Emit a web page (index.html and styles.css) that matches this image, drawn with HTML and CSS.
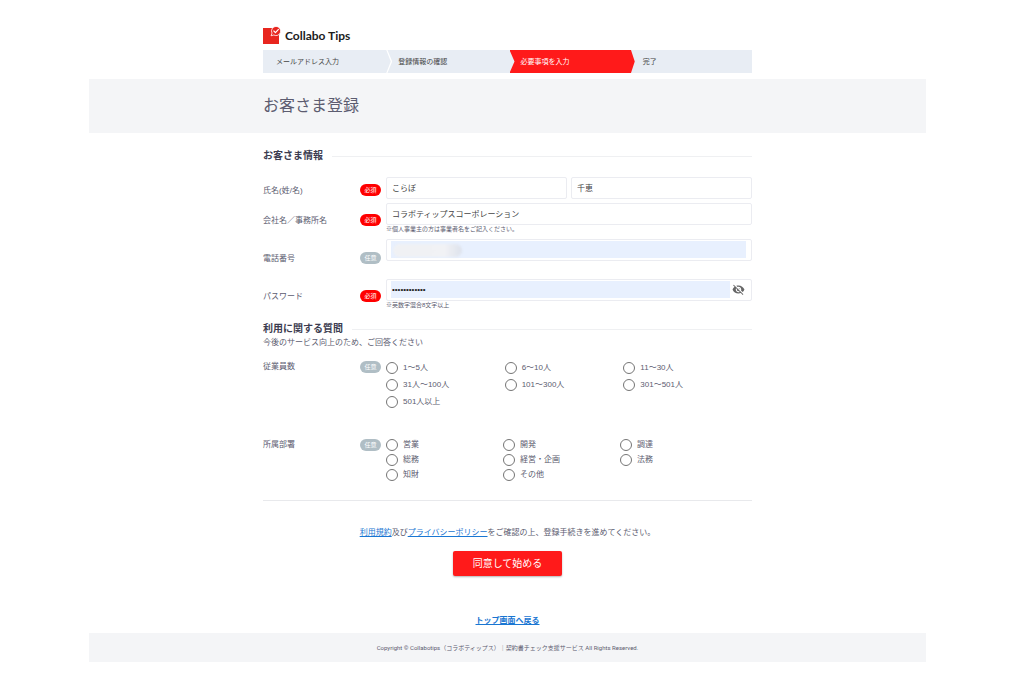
FILE: index.html
```html
<!DOCTYPE html>
<html lang="ja">
<head>
<meta charset="utf-8">
<meta name="viewport" content="width=device-width, initial-scale=1">
<title>お客さま登録 | Collabo Tips</title>
<link rel="stylesheet" href="styles.css">
</head>
<body>
<div class="page">
  <header class="container header">
    <div class="logo">
      <svg class="logo-mark" viewBox="0 0 18 18" aria-hidden="true">
        <path d="M0 2h9l7 7v9H0z" fill="#e8261f"/>
        <path d="M13 .400a4.600 4.600 0 1 1-2.200 8.600L8 9.800l1-2.700A4.600 4.600 0 0 1 13 .400z" fill="#e8261f" stroke="#fff" stroke-width=".8"/>
        <path d="M10.500 4.700l1.900 1.900 3.300-3.400" fill="none" stroke="#fff" stroke-width="1.200"/>
      </svg>
      <span class="logo-name">Collabo Tips</span>
    </div>
    <ol class="steps">
      <li class="step step-divided">メールアドレス入力</li>
      <li class="step">登録情報の確認</li>
      <li class="step step-current" aria-current="step"><span class="step-text">必要事項を入力</span></li>
      <li class="step">完了</li>
    </ol>
  </header>

  <div class="title-band">
    <h1 class="container title">お客さま登録</h1>
  </div>

  <main class="container">
    <form class="form">
      <h2 class="section-title">お客さま情報</h2>
      <div class="row row-name">
        <label class="label" for="sei">氏名(姓/名)</label>
        <span class="badge required">必須</span>
        <div class="field pair">
          <input class="box" id="sei" type="text" value="こらぼ">
          <input class="box" type="text" aria-label="名" value="千恵">
        </div>
      </div>
      <div class="row">
        <label class="label" for="company">会社名／事務所名</label>
        <span class="badge required">必須</span>
        <div class="field">
          <input class="box" id="company" type="text" value="コラボティップスコーポレーション">
          <p class="note">※個人事業主の方は事業者名をご記入ください。</p>
        </div>
      </div>
      <div class="row row-phone">
        <label class="label" for="phone">電話番号</label>
        <span class="badge optional">任意</span>
        <div class="field">
          <div class="box filled">
            <input class="fill" id="phone" type="tel">
            <span class="mask"></span>
          </div>
        </div>
      </div>
      <div class="row">
        <label class="label" for="password">パスワード</label>
        <span class="badge required">必須</span>
        <div class="field">
          <div class="box filled">
            <input class="fill password" id="password" type="password" value="abcdefgh1234">
            <button class="eye" type="button" aria-label="パスワードを表示">
              <svg viewBox="0 0 24 24" aria-hidden="true"><path fill="#666" d="M12 7c2.760 0 5 2.240 5 5 0 .650-.130 1.260-.360 1.830l2.920 2.920c1.510-1.260 2.700-2.890 3.430-4.750-1.730-4.390-6-7.500-11-7.500-1.400 0-2.740.250-3.980.700l2.160 2.160C10.740 7.130 11.350 7 12 7zM2 4.270l2.280 2.280.460.460C3.080 8.300 1.780 10.020 1 12c1.730 4.390 6 7.500 11 7.500 1.550 0 3.030-.300 4.380-.840l.420.420L19.730 22 21 20.730 3.270 3 2 4.270zM7.530 9.800l1.550 1.550c-.050.210-.080.430-.080.650 0 1.660 1.340 3 3 3 .220 0 .440-.030.650-.080l1.550 1.550c-.670.330-1.410.530-2.200.530-2.760 0-5-2.240-5-5 0-.790.200-1.530.530-2.200zm4.310-.780l3.150 3.150.020-.160c0-1.660-1.340-3-3-3l-.170.010z"/></svg>
            </button>
          </div>
          <p class="note">※英数字混合8文字以上</p>
        </div>
      </div>

      <h2 class="section-title section-questions">利用に関する質問</h2>
      <p class="lead">今後のサービス向上のため、ご回答ください</p>
      <div class="row row-options" role="radiogroup" aria-labelledby="size-label">
        <span class="label" id="size-label">従業員数</span>
        <span class="badge optional">任意</span>
        <div class="options options-size">
          <label class="option"><input type="radio" name="size">1〜5人</label>
          <label class="option"><input type="radio" name="size">6〜10人</label>
          <label class="option"><input type="radio" name="size">11〜30人</label>
          <label class="option"><input type="radio" name="size">31人〜100人</label>
          <label class="option"><input type="radio" name="size">101〜300人</label>
          <label class="option"><input type="radio" name="size">301〜501人</label>
          <label class="option"><input type="radio" name="size">501人以上</label>
        </div>
      </div>
      <div class="row row-options row-dept" role="radiogroup" aria-labelledby="dept-label">
        <span class="label" id="dept-label">所属部署</span>
        <span class="badge optional">任意</span>
        <div class="options options-dept">
          <label class="option"><input type="radio" name="dept">営業</label>
          <label class="option"><input type="radio" name="dept">開発</label>
          <label class="option"><input type="radio" name="dept">調達</label>
          <label class="option"><input type="radio" name="dept">総務</label>
          <label class="option"><input type="radio" name="dept">経営・企画</label>
          <label class="option"><input type="radio" name="dept">法務</label>
          <label class="option"><input type="radio" name="dept">知財</label>
          <label class="option"><input type="radio" name="dept">その他</label>
        </div>
      </div>

      <div class="actions">
        <p class="terms"><a href="#terms">利用規約</a>及び<a href="#privacy">プライバシーポリシー</a>をご確認の上、登録手続きを進めてください。</p>
        <button class="submit" type="submit">同意して始める</button>
        <a class="back" href="#top">トップ画面へ戻る</a>
      </div>
    </form>
  </main>

  <footer class="footer">Copyright © Collabotips（コラボティップス）｜契約書チェック支援サービス All Rights Reserved.</footer>
</div>
</body>
</html>
```
FILE: styles.css
```css
* { box-sizing: border-box; }

body {
  margin: 0;
  padding: 26px 98px 20px 89px;
  background: #fff;
  color: #5c5c70;
  font-family: "Liberation Sans", "Noto Sans CJK JP", sans-serif;
  font-size: 8px;
  line-height: 12px;
}

h1, h2, p, ol { margin: 0; padding: 0; }
input, button { font: inherit; color: inherit; }
a { color: #1976d2; }

.container { max-width: 489px; margin: 0 auto; }

.logo { display: flex; align-items: center; gap: 4px; height: 18px; }
.logo-mark { width: 18px; height: 18px; overflow: visible; }
.logo-name {
  color: #1c1c1c;
  font: bold 12px/18px Lato, sans-serif;
  padding-top: 2px;
}

.steps {
  display: grid;
  grid-template-columns: repeat(4, 1fr);
  margin-top: 6px;
  background: #e8edf4;
  list-style: none;
}
.step {
  position: relative;
  padding-left: 13px;
  color: #444;
  font-size: 7px;
  line-height: 23px;
}
.step-divided::after {
  content: "";
  position: absolute;
  top: 0;
  right: -7px;
  width: 6px;
  height: 100%;
  background: #fff;
  clip-path: polygon(0 0, 20% 0, 100% 50%, 20% 100%, 0 100%, 75% 50%);
}
.step-current { color: #fff; }
.step-current::before {
  content: "";
  position: absolute;
  inset: 0 -5px 0 2px;
  background: #ff1a1a;
  clip-path: polygon(0 0, 97% 0, 100% 50%, 97% 100%, 0 100%, 4% 50%);
}
.step-text { position: relative; }

.title-band { margin-top: 6px; padding: 15px 0; background: #f4f5f7; }
.title { font-size: 16px; font-weight: 400; line-height: 24px; }

.form { padding-top: 15px; }
.section-title {
  display: flex;
  align-items: center;
  gap: 9px;
  color: #3c3c50;
  font-size: 10px;
  line-height: 16px;
}
.section-title::after { content: ""; flex: 1; height: 1px; background: #eff0f2; }
.section-questions { margin-top: 8px; }
.lead { line-height: 12px; }

.row {
  display: grid;
  grid-template-columns: 97px 21px 1fr;
  align-items: center;
  min-height: 34px;
}
.row-name { min-height: 26px; margin-top: 13px; }
.row-phone { min-height: 38px; margin: 2px 0; }
.label { padding-top: 1px; }
.badge {
  border-radius: 6px;
  color: #fff;
  font-size: 6px;
  line-height: 12px;
  text-align: center;
}
.required { background: #f00; }
.optional { background: #b0bec5; }

.field { align-self: start; margin-left: 5px; }
.pair { display: grid; grid-template-columns: 1fr 1fr; gap: 4px; }
.box {
  display: block;
  width: 100%;
  height: 22px;
  padding: 0 5px 1px;
  border: 1px solid #ebecf1;
  border-radius: 2px;
  background: #fff;
  color: #444;
}
.note { font-size: 6px; line-height: 9px; }

.filled { display: flex; position: relative; padding: 1px 5px 2px 4px; }
.fill {
  flex: 1;
  min-width: 0;
  padding: 0 1px;
  border: 0;
  background: #e8f0fe;
}
.password { color: #222; }
.mask {
  position: absolute;
  left: 6px;
  top: 4px;
  width: 69px;
  height: 13px;
  border-radius: 7px;
  background: linear-gradient(90deg, #f0f1f4, #f1f2f5 75%, #dde2ec);
  filter: blur(1px);
}
.eye {
  display: grid;
  place-items: center;
  width: 16px;
  padding: 0;
  border: 0;
  background: none;
}
.eye svg { width: 13px; height: 13px; }

.row-options { align-items: start; margin-top: 12px; }
.row-options .label { padding: 0; }
.options { display: grid; grid-template-columns: repeat(3, 1fr); margin-left: 5px; padding: 1px 10px 0 0; }
.options-size { row-gap: 5px; }
.options-dept { row-gap: 3px; padding: 0 15px 0 0; }
.row-dept { margin-top: 31px; }
.option { display: flex; align-items: center; gap: 5px; line-height: 12px; white-space: nowrap; }
.option input {
  appearance: none;
  width: 12px;
  height: 12px;
  margin: 0;
  border: 1px solid #757575;
  border-radius: 50%;
}
.option input:checked { background: radial-gradient(#1976d2 35%, transparent 40%); }

.actions {
  display: flex;
  flex-direction: column;
  align-items: center;
  margin-top: 19px;
  padding-top: 26px;
  border-top: 1px solid #e8e9ec;
}
.submit {
  width: 109px;
  margin-top: 12px;
  padding: 0;
  border: 0;
  border-radius: 2px;
  background: #ff1a1a;
  box-shadow: 0 1px 2px rgba(0, 0, 0, .3);
  color: #fff;
  font-size: 10px;
  line-height: 25px;
}
.back { margin-top: 39px; font-weight: 700; }

.footer {
  margin-top: 6px;
  background: #f4f5f7;
  font-family: Roboto, "Noto Sans CJK JP", sans-serif;
  font-size: 6px;
  line-height: 29px;
  text-align: center;
}
```
